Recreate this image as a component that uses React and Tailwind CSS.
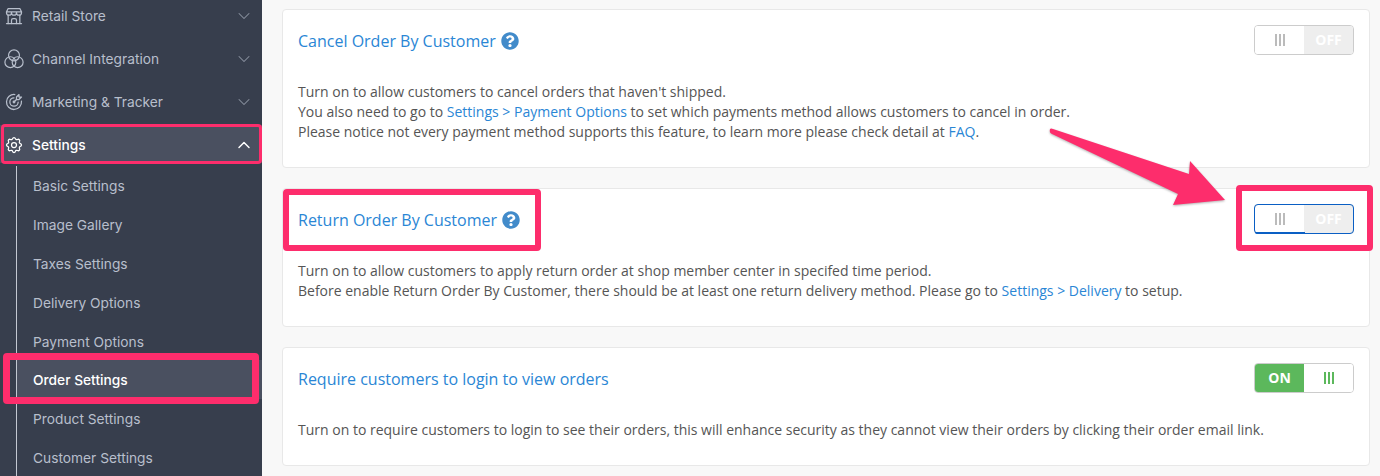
import { ChevronDown, ChevronUp } from 'lucide-react'
import { FaQuestionCircle } from 'react-icons/fa'
import { TbBuildingStore, TbTargetArrow, TbSettings } from 'react-icons/tb'

const ChannelIcon = ({ size = 20 }) => (
  <svg width={size} height={size} viewBox="1 1 22 22" fill="none" stroke="currentColor" strokeWidth="1.3">
    <circle cx="12" cy="8" r="6" />
    <circle cx="8" cy="15.5" r="6" />
    <circle cx="16" cy="15.5" r="6" />
  </svg>
)

const menuItems = [
  { icon: TbBuildingStore, label: 'Retail Store' },
  { icon: ChannelIcon, label: 'Channel Integration' },
  { icon: TbTargetArrow, label: 'Marketing & Tracker' },
]

const subItems = ['Basic Settings', 'Image Gallery', 'Taxes Settings', 'Delivery Options', 'Payment Options', 'Order Settings', 'Product Settings', 'Customer Settings']

function Grip({ color }) {
  return (
    <div className="flex w-1/2 items-center justify-center gap-[2px] bg-white">
      <i className={`h-3 w-[2px] ${color}`} />
      <i className={`h-3 w-[2px] ${color}`} />
      <i className={`h-3 w-[2px] ${color}`} />
    </div>
  )
}

function Toggle({ on }) {
  return (
    <div className="flex h-[30px] w-[100px] overflow-hidden rounded border border-[#ccc] text-sm font-bold">
      {on ? (
        <>
          <div className="flex w-1/2 items-center justify-center bg-[#5cb85c] text-white">ON</div>
          <Grip color="bg-[#5cb85c]" />
        </>
      ) : (
        <>
          <Grip color="bg-[#bbb]" />
          <div className="flex w-1/2 items-center justify-center bg-[#eee] text-white">OFF</div>
        </>
      )}
    </div>
  )
}

function Card({ title, help, on, children, className }) {
  return (
    <section className={`rounded border border-[#e8e8e8] bg-white px-[15px] ${className}`}>
      <div className="flex items-center justify-between pt-[15px]">
        <div className="flex items-center gap-[5px] pt-[2px] text-base text-[#2a86d5]">
          {title}
          {help && <FaQuestionCircle size={18} className="text-[#428bca]" />}
        </div>
        <Toggle on={on} />
      </div>
      {children}
    </section>
  )
}

export default function App() {
  return (
    <div className="relative flex h-[476px] w-[1380px] overflow-hidden bg-[#f8f8f8] font-['Open_Sans',sans-serif] text-sm leading-5 text-[#555]">
      <aside className="w-[262px] shrink-0 bg-[#373e4d] font-['Inter',sans-serif] text-[13.75px]">
        <nav className="-mt-[6px]">
          {menuItems.map(({ icon: Icon, label }) => (
            <div key={label} className="flex h-[43px] items-center pl-1 pr-2 text-[#b8bfcc]">
              <Icon size={20} strokeWidth={1.5} />
              <span className="ml-2">{label}</span>
              <ChevronDown size={20} strokeWidth={1.25} className="ml-auto text-[#8b92a1]" />
            </div>
          ))}
          <div className="mt-[2px] flex h-[38px] items-center bg-[#4a5060] pl-1 pr-2 pt-px font-medium text-white">
            <TbSettings size={20} strokeWidth={1.5} />
            <span className="ml-2">Settings</span>
            <ChevronUp size={20} strokeWidth={1.75} className="ml-auto" />
          </div>
        </nav>
        <ul className="ml-4 mt-[11px] h-full border-l border-[#c3c8d2]">
          <div className="-mt-[8px]">
            {subItems.map(item => (
              <li
                key={item}
                className={`flex h-[39px] items-center pl-4 ${item === 'Order Settings' ? '-mt-px bg-[#4a5060] font-medium text-white' : 'text-[#b8bfcc]'}`}
              >
                {item}
              </li>
            ))}
          </div>
        </ul>
      </aside>

      <main className="flex-1 pl-5 pr-[10px] pt-[9px]">
        <Card title="Cancel Order By Customer" help className="h-[159px]">
          <p className="mt-[27px]">
            Turn on to allow customers to cancel orders that haven't shipped.<br />
            You also need to go to <span className="text-[#2a86d5]">Settings &gt; Payment Options</span> to set which payments method allows customers to cancel in order.<br />
            Please notice not every payment method supports this feature, to learn more please check detail at <span className="text-[#2a86d5]">FAQ</span>.
          </p>
        </Card>
        <Card title="Return Order By Customer" help className="mt-5 h-[139px]">
          <p className="mt-[27px]">
            Turn on to allow customers to apply return order at shop member center in specifed time period.<br />
            Before enable Return Order By Customer, there should be at least one return delivery method. Please go to <span className="text-[#2a86d5]">Settings &gt; Delivery</span> to setup.
          </p>
        </Card>
        <Card title="Require customers to login to view orders" on className="mt-5 h-[119px]">
          <p className="mt-[27px]">
            Turn on to require customers to login to see their orders, this will enhance security as they cannot view their orders by clicking their order email link.
          </p>
        </Card>
      </main>

      {/* Annotation overlays */}
      <div className="pointer-events-none absolute left-[1px] top-[124px] h-[40px] w-[261px] rounded-sm border-[3px] border-[#fd2d6c]" />
      <div className="pointer-events-none absolute left-[3px] top-[353px] h-[51px] w-[256px] rounded-sm border-[7px] border-[#fd2d6c]" />
      <div className="pointer-events-none absolute left-[283px] top-[189px] h-[62px] w-[258px] rounded-sm border-[6px] border-[#fd2d6c]" />
      <div className="pointer-events-none absolute left-[1236px] top-[185px] h-[66px] w-[137px] rounded-sm border-[6px] border-[#fd2d6c]" />
      <div className="pointer-events-none absolute left-[1254px] top-[204px] h-[30px] w-[100px] rounded border border-[#0a5fc4]" />
      <div className="pointer-events-none absolute left-[1255px] top-[232px] h-[2px] w-[50px] rounded-bl bg-[#0a5fc4]" />
      <svg className="pointer-events-none absolute left-0 top-0" width="1380" height="476">
        <path
          d="M1050 129 Q1049 133 1052 134 L1178 194 L1173 205 L1225 200 L1190 161 L1189 174 L1053 129 Q1051 128 1050 129 Z"
          fill="#fd2d6c"
          style={{ filter: 'drop-shadow(0 1px 1px rgba(0,0,0,0.3))' }}
        />
      </svg>
    </div>
  )
}
